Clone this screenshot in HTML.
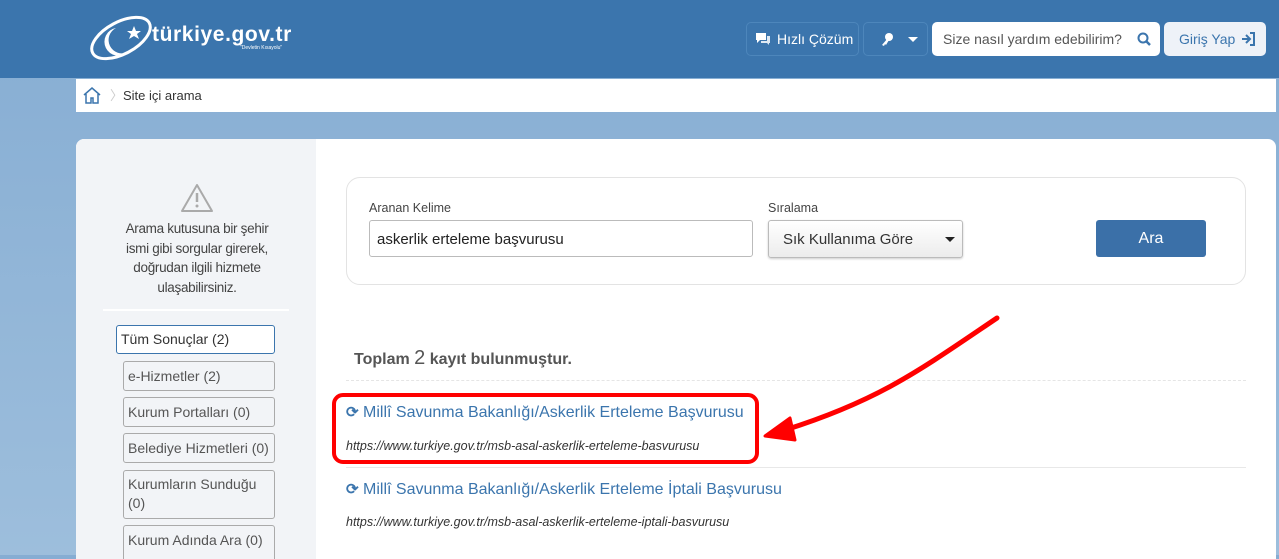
<!DOCTYPE html>
<html><head><meta charset="utf-8"><style>
*{box-sizing:border-box;margin:0;padding:0}
body{width:1279px;height:555px;overflow:hidden;font-family:"Liberation Sans",sans-serif;background:linear-gradient(#86add3,#9dbedc);position:relative;color:#333}
.hdr{position:absolute;left:0;top:0;width:1279px;height:78px;background:#3b75ad}
.abs{position:absolute}
.hb{position:absolute;top:22px;height:34px;border:1px solid #4d86bb;border-radius:5px;color:#fff;font-size:14px;line-height:32px}
.bc{position:absolute;left:76px;top:79px;width:1200px;height:33px;background:#fff;font-size:13px;line-height:33px}
.main{position:absolute;left:76px;top:139px;width:1200px;height:420px;background:#fff;border-radius:8px 8px 0 0;overflow:hidden}
.side{position:absolute;left:0;top:0;width:240px;height:420px;background:#f2f4f7}
.fb{position:absolute;left:47px;width:152px;border:1px solid #aaa;border-radius:3px;font-size:14px;color:#555;padding:0 4px;line-height:19px;background:#f2f4f7}
.lbl{font-size:12.5px;color:#444;position:absolute}
.link{position:absolute;left:346px;font-size:16px;color:#3b75ad}
.url{position:absolute;left:346px;font-size:12.5px;font-style:italic;color:#333}
</style></head><body>
<div class="hdr"></div>
<svg class="abs" style="left:88px;top:12px" width="80" height="52" viewBox="0 0 80 52"><ellipse cx="33" cy="26" rx="32" ry="16" transform="rotate(-28 33 26)" fill="none" stroke="#fff" stroke-width="3"/><path d="M28 16 A14 14 0 1 0 40 40 A11 11 0 1 1 28 16Z" fill="#fff"/><polygon points="46,14 48,19 53,19 49,22 51,27 46,24 41,27 43,22 39,19 44,19" fill="#fff"/></svg>
<div class="abs" style="left:152px;top:23px;color:#fff;font-weight:bold;font-size:21px;letter-spacing:0.6px">türkiye.gov.tr</div>
<div class="abs" style="left:240px;top:45px;color:#fff;font-size:5px">"Devletin Kısayolu"</div>
<div class="hb" style="left:746px;width:113px;padding-left:30px"><svg class="abs" style="left:8px;top:9px" width="16" height="14"><path d="M1 1h10v7H5l-3 3V8H1z" fill="#fff"/><path d="M12 4h3v7h-1v2l-2-2H6V9h6z" fill="#dfe9f3"/></svg>Hızlı Çözüm</div>
<div class="hb" style="left:863px;width:65px"><svg class="abs" style="left:16px;top:9px" width="14" height="16"><circle cx="9" cy="5" r="4" fill="#fff"/><path d="M7 7L2 13l2 1 1-2 1 1 3-5z" fill="#fff"/></svg><svg class="abs" style="left:44px;top:14px" width="10" height="6"><path d="M0 0h10L5 5z" fill="#fff"/></svg></div>
<div class="abs" style="left:932px;top:22px;width:228px;height:34px;background:#fff;border-radius:5px;font-size:14px;color:#555;line-height:34px;padding-left:11px">Size nasıl yardım edebilirim?<svg class="abs" style="left:205px;top:10px" width="14" height="14"><circle cx="6" cy="6" r="4.5" fill="none" stroke="#3b75ad" stroke-width="2"/><path d="M9 9l4 4" stroke="#3b75ad" stroke-width="2.5"/></svg></div>
<div class="abs" style="left:1164px;top:22px;width:102px;height:34px;background:#eef2f8;border-radius:5px;font-size:14px;color:#3b75ad;line-height:34px;padding-left:15px">Giriş Yap<svg class="abs" style="left:77px;top:10px" width="14" height="14"><path d="M1 7h7M5 3l4 4-4 4" stroke="#3b75ad" stroke-width="2" fill="none"/><path d="M9 1h4v12H9" stroke="#3b75ad" stroke-width="2" fill="none"/></svg></div>
<div class="bc"><svg class="abs" style="left:6px;top:7px" width="20" height="18"><path d="M2 9L10 2l8 7M4 8v9h5v-5h2v5h5V8" fill="none" stroke="#3b75ad" stroke-width="1.5"/></svg><span class="abs" style="left:34px;color:#ccc">〉</span><span class="abs" style="left:47px">Site içi arama</span></div>
<div class="main">
<div class="side">
<svg class="abs" style="left:104px;top:44px" width="34" height="30"><path d="M17 2L32 28H2z" fill="none" stroke="#aaa" stroke-width="2" stroke-linejoin="round"/><path d="M17 10v9" stroke="#aaa" stroke-width="2.5"/><circle cx="17" cy="23" r="1.5" fill="#aaa"/></svg>
<div class="abs" style="left:38px;top:80px;width:166px;text-align:center;font-size:13.5px;line-height:19.5px;color:#444;letter-spacing:-0.3px">Arama kutusuna bir şehir ismi gibi sorgular girerek, doğrudan ilgili hizmete ulaşabilirsiniz.</div>
<div class="abs" style="left:27px;top:170px;width:186px;height:2px;background:#fff"></div>
<div class="fb" style="left:40px;width:159px;top:186px;height:29px;line-height:27px;background:#fff;border-color:#3b75ad;color:#333">Tüm Sonuçlar (2)</div>
<div class="fb" style="top:222px;height:30px;line-height:28px">e-Hizmetler (2)</div>
<div class="fb" style="top:258px;height:30px;line-height:28px">Kurum Portalları (0)</div>
<div class="fb" style="top:294px;height:30px;line-height:28px">Belediye Hizmetleri (0)</div>
<div class="fb" style="top:331px;height:49px;padding-top:4px">Kurumların Sunduğu (0)</div>
<div class="fb" style="top:386px;height:40px;line-height:28px">Kurum Adında Ara (0)</div>
</div>
</div>
<div class="abs" style="left:346px;top:177px;width:900px;height:108px;border:1px solid #e3e3e3;border-radius:14px;background:#fff"></div>
<div class="lbl" style="left:369px;top:201px">Aranan Kelime</div>
<div class="abs" style="left:369px;top:220px;width:384px;height:37px;border:1px solid #bbb;border-radius:3px;font-size:15px;line-height:37px;padding-left:7px;color:#222">askerlik erteleme başvurusu</div>
<div class="lbl" style="left:768px;top:201px">Sıralama</div>
<div class="abs" style="left:768px;top:220px;width:195px;height:38px;border:1px solid #bbb;border-radius:3px;font-size:15px;line-height:38px;padding-left:14px;color:#333;background:linear-gradient(#fff,#ececec);box-shadow:0 1px 2px rgba(0,0,0,.2)">Sık Kullanıma Göre<svg class="abs" style="left:176px;top:16px" width="10" height="6"><path d="M0 0h10L5 5z" fill="#222"/></svg></div>
<div class="abs" style="left:1096px;top:220px;width:110px;height:37px;background:#3b70a8;border-radius:3px;color:#fff;font-size:16px;text-align:center;line-height:37px">Ara</div>
<div class="abs" style="left:354px;top:347px;font-size:16px;font-weight:bold;color:#555">Toplam <span style="font-size:20px;font-weight:normal">2</span> kayıt bulunmuştur.</div>
<div class="abs" style="left:346px;top:380px;width:900px;border-top:1px dashed #e5e5e5"></div>
<div class="abs" style="left:346px;top:467px;width:900px;border-top:1px solid #e8e8e8"></div>
<div class="link" style="top:403px"><span style="font-size:15px;font-weight:bold">⟳</span> Millî Savunma Bakanlığı/Askerlik Erteleme Başvurusu</div>
<div class="url" style="top:439px">https://www.turkiye.gov.tr/msb-asal-askerlik-erteleme-basvurusu</div>
<div class="link" style="top:480px"><span style="font-size:15px;font-weight:bold">⟳</span> Millî Savunma Bakanlığı/Askerlik Erteleme İptali Başvurusu</div>
<div class="url" style="top:515px">https://www.turkiye.gov.tr/msb-asal-askerlik-erteleme-iptali-basvurusu</div>
<div class="abs" style="left:332px;top:393px;width:427px;height:71px;border:4px solid #f00;border-radius:11px"></div>
<svg class="abs" style="left:0;top:0" width="1279" height="555"><path d="M997 318 C920 370 880 400 785 430" fill="none" stroke="#f00" stroke-width="5" stroke-linecap="round"/><path d="M765 436 L790 418 L795 440Z" fill="#f00" stroke="#f00" stroke-width="3" stroke-linejoin="round"/></svg>
</body></html>
